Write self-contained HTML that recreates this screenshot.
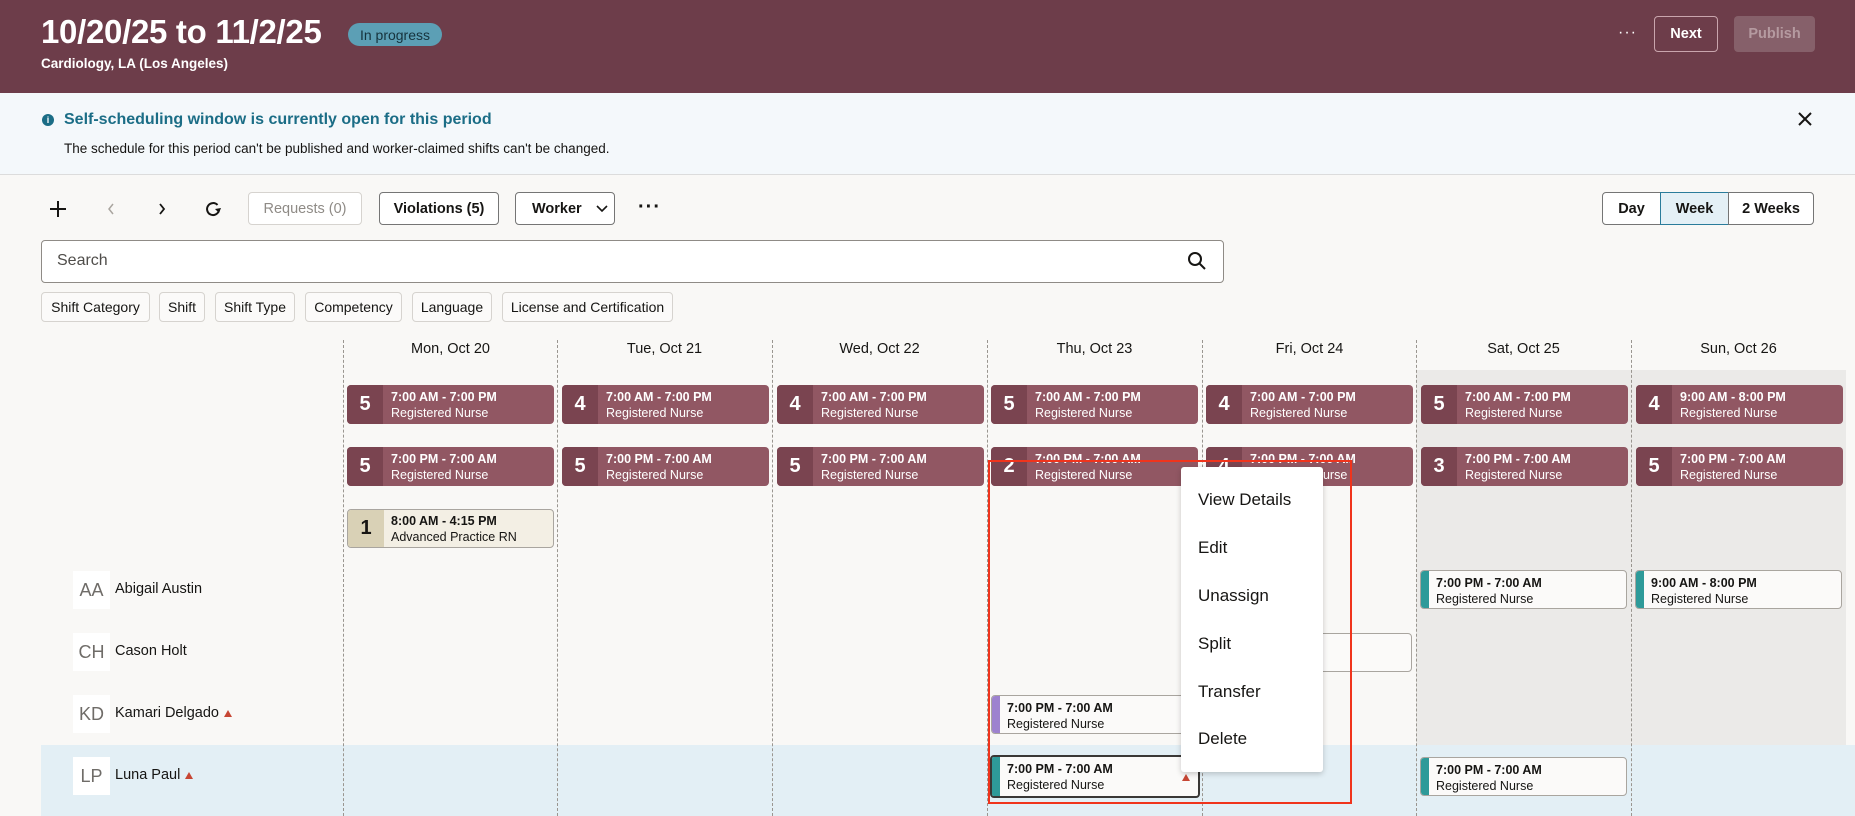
<!DOCTYPE html>
<html><head><meta charset="utf-8"><style>
*{box-sizing:border-box;margin:0;padding:0}
body{width:1855px;height:816px;overflow:hidden;background:#f9f8f6;font-family:"Liberation Sans",sans-serif;color:#161513;position:relative}
.a{position:absolute}
.hdr{left:0;top:0;width:1855px;height:93px;background:#6d3d4a}
.btn{position:absolute;border:1px solid #757575;border-radius:4px;background:#fff;font-size:14.5px;font-weight:bold;display:flex;align-items:center;justify-content:center;color:#161513}
.chip{position:absolute;top:292px;height:30px;border:1px solid #d6d3cf;border-radius:4px;background:#fbfaf9;font-size:14px;display:flex;align-items:center;justify-content:center}
.dh{position:absolute;top:341px;width:215px;text-align:center;font-size:14.5px}
.vl{position:absolute;top:340px;height:476px;border-left:1px dashed #9a9690;width:0}
.sc{position:absolute;width:207px;height:39px;border-radius:4px;background:#915763;color:#fff;overflow:hidden}
.sc .n{position:absolute;left:0;top:0;width:36px;height:100%;background:#7a4450;font-size:20px;font-weight:bold;display:flex;align-items:center;justify-content:center}
.sc .t{position:absolute;left:44px;top:4px;font-size:12.5px;font-weight:bold;line-height:16px;white-space:nowrap}
.sc .t span{font-weight:normal}
.wc{position:absolute;width:207px;height:39px;border-radius:4px;background:#fbfaf9;border:1px solid #a9a59f;overflow:hidden}
.wc .b{position:absolute;left:0;top:0;width:8px;height:100%;background:#2e9a99}
.wc .t{position:absolute;left:15px;top:4px;font-size:12.5px;line-height:16px;white-space:nowrap}
.av{position:absolute;left:73px;width:37px;height:38px;background:#fff;color:#6f6c68;font-size:18px;display:flex;align-items:center;justify-content:center}
.nm{position:absolute;left:115px;font-size:14.5px}
.tri{display:inline-block;width:0;height:0;border-left:4px solid transparent;border-right:4px solid transparent;border-bottom:7px solid #c74634;margin-left:5px}
.mi{position:absolute;left:1198px;font-size:17px}
</style></head><body>
<div class="a hdr"></div>
<div class="a" style="left:41px;top:13px;color:#fff;font-size:33px;font-weight:bold;letter-spacing:-0.3px">10/20/25 to 11/2/25</div>
<div class="a" style="left:348px;top:23px;width:94px;height:23px;border-radius:12px;background:#5c9fb5;color:#16333d;font-size:14px;display:flex;align-items:center;justify-content:center">In progress</div>
<div class="a" style="left:41px;top:56px;color:#fff;font-size:13.5px;font-weight:bold">Cardiology, LA (Los Angeles)</div>
<div class="a" style="left:1618px;top:24px;color:#fff;font-size:16px;letter-spacing:1px">···</div>
<div class="a" style="left:1654px;top:16px;width:64px;height:36px;border:1px solid #c9a5ad;border-radius:4px;color:#fff;font-weight:bold;font-size:14.5px;display:flex;align-items:center;justify-content:center">Next</div>
<div class="a" style="left:1734px;top:16px;width:81px;height:36px;background:#86606a;border-radius:4px;color:#b59aa0;font-weight:bold;font-size:14.5px;display:flex;align-items:center;justify-content:center">Publish</div>

<div class="a" style="left:0;top:93px;width:1855px;height:82px;background:#f4f8fb;border-bottom:1px solid #dcdcdc"></div>
<div class="a" style="left:42px;top:114px;width:12px;height:12px;border-radius:50%;background:#1b6d86;color:#fff;font-size:9px;font-weight:bold;text-align:center;line-height:12px">i</div>
<div class="a" style="left:64px;top:111px;color:#1b6d86;font-size:16px;font-weight:bold">Self-scheduling window is currently open for this period</div>
<div class="a" style="left:64px;top:141px;font-size:13.5px">The schedule for this period can't be published and worker-claimed shifts can't be changed.</div>
<svg class="a" style="left:1797px;top:111px" width="16" height="16"><path d="M2 2L14 14M14 2L2 14" stroke="#161513" stroke-width="2"/></svg>

<svg class="a" style="left:48px;top:199px" width="20" height="20"><path d="M10 2V18M2 10H18" stroke="#161513" stroke-width="2"/></svg>
<svg class="a" style="left:106px;top:201px" width="10" height="16"><path d="M7 3L3 8L7 13" stroke="#a9a59f" stroke-width="1.5" fill="none"/></svg>
<svg class="a" style="left:157px;top:201px" width="10" height="16"><path d="M3 3L7 8L3 13" stroke="#161513" stroke-width="1.8" fill="none"/></svg>
<svg class="a" style="left:204px;top:200px" width="18" height="18"><path d="M13.5 5A6 6 0 1 0 15 10" stroke="#161513" stroke-width="2" fill="none"/><path d="M11 9L15 13L17 8Z" fill="#161513"/></svg>
<div class="btn" style="left:248px;top:192px;width:114px;height:33px;border-color:#d6d3cf;color:#8f8b86;font-weight:normal">Requests (0)</div>
<div class="btn" style="left:379px;top:192px;width:120px;height:33px">Violations (5)</div>
<div class="btn" style="left:515px;top:192px;width:100px;height:33px;justify-content:flex-start;padding-left:16px">Worker<svg style="margin-left:14px" width="12" height="8"><path d="M1 1L6 6L11 1" stroke="#161513" stroke-width="1.6" fill="none"/></svg></div>
<div class="a" style="left:638px;top:196px;font-size:20px;font-weight:bold;letter-spacing:1px">···</div>
<div class="btn" style="left:1602px;top:192px;width:59px;height:33px;border-radius:4px 0 0 4px">Day</div>
<div class="btn" style="left:1660px;top:192px;width:69px;height:33px;border-radius:0;background:#e4f0f6;border-color:#2a7c9b">Week</div>
<div class="btn" style="left:1728px;top:192px;width:86px;height:33px;border-radius:0 4px 4px 0">2 Weeks</div>

<div class="a" style="left:41px;top:240px;width:1183px;height:43px;border:1px solid #8f8b86;border-radius:4px;background:#fff"></div>
<div class="a" style="left:57px;top:252px;font-size:16px;color:#4f4d4a">Search</div>
<svg class="a" style="left:1187px;top:251px" width="20" height="20"><circle cx="8" cy="8" r="6" stroke="#161513" stroke-width="2" fill="none"/><path d="M12.5 12.5L18 18" stroke="#161513" stroke-width="2"/></svg>

<div class="chip" style="left:41px;width:109px">Shift Category</div>
<div class="chip" style="left:159px;width:46px">Shift</div>
<div class="chip" style="left:215px;width:80px">Shift Type</div>
<div class="chip" style="left:305px;width:97px">Competency</div>
<div class="chip" style="left:412px;width:80px">Language</div>
<div class="chip" style="left:502px;width:171px">License and Certification</div>

<div class="a" style="left:1416px;top:370px;width:430px;height:446px;background:#ebeae8"></div>
<div class="a" style="left:41px;top:745px;width:1814px;height:71px;background:#e3eff5"></div>

<div class="vl" style="left:343px"></div><div class="vl" style="left:557px"></div><div class="vl" style="left:772px"></div><div class="vl" style="left:987px"></div><div class="vl" style="left:1202px"></div><div class="vl" style="left:1416px"></div><div class="vl" style="left:1631px"></div>

<div class="dh" style="left:343px">Mon, Oct 20</div>
<div class="dh" style="left:557px">Tue, Oct 21</div>
<div class="dh" style="left:772px">Wed, Oct 22</div>
<div class="dh" style="left:987px">Thu, Oct 23</div>
<div class="dh" style="left:1202px">Fri, Oct 24</div>
<div class="dh" style="left:1416px">Sat, Oct 25</div>
<div class="dh" style="left:1631px">Sun, Oct 26</div>

<div class="sc" style="left:347px;top:385px"><div class="n">5</div><div class="t">7:00 AM - 7:00 PM<br><span>Registered Nurse</span></div></div>
<div class="sc" style="left:562px;top:385px"><div class="n">4</div><div class="t">7:00 AM - 7:00 PM<br><span>Registered Nurse</span></div></div>
<div class="sc" style="left:777px;top:385px"><div class="n">4</div><div class="t">7:00 AM - 7:00 PM<br><span>Registered Nurse</span></div></div>
<div class="sc" style="left:991px;top:385px"><div class="n">5</div><div class="t">7:00 AM - 7:00 PM<br><span>Registered Nurse</span></div></div>
<div class="sc" style="left:1206px;top:385px"><div class="n">4</div><div class="t">7:00 AM - 7:00 PM<br><span>Registered Nurse</span></div></div>
<div class="sc" style="left:1421px;top:385px"><div class="n">5</div><div class="t">7:00 AM - 7:00 PM<br><span>Registered Nurse</span></div></div>
<div class="sc" style="left:1636px;top:385px"><div class="n">4</div><div class="t">9:00 AM - 8:00 PM<br><span>Registered Nurse</span></div></div>

<div class="sc" style="left:347px;top:447px"><div class="n">5</div><div class="t">7:00 PM - 7:00 AM<br><span>Registered Nurse</span></div></div>
<div class="sc" style="left:562px;top:447px"><div class="n">5</div><div class="t">7:00 PM - 7:00 AM<br><span>Registered Nurse</span></div></div>
<div class="sc" style="left:777px;top:447px"><div class="n">5</div><div class="t">7:00 PM - 7:00 AM<br><span>Registered Nurse</span></div></div>
<div class="sc" style="left:991px;top:447px"><div class="n">2</div><div class="t">7:00 PM - 7:00 AM<br><span>Registered Nurse</span></div></div>
<div class="sc" style="left:1206px;top:447px"><div class="n">4</div><div class="t">7:00 PM - 7:00 AM<br><span>Registered Nurse</span></div></div>
<div class="sc" style="left:1421px;top:447px"><div class="n">3</div><div class="t">7:00 PM - 7:00 AM<br><span>Registered Nurse</span></div></div>
<div class="sc" style="left:1636px;top:447px"><div class="n">5</div><div class="t">7:00 PM - 7:00 AM<br><span>Registered Nurse</span></div></div>

<div class="sc" style="left:347px;top:509px;background:#f3efe4;color:#161513;border:1px solid #a9a59f"><div class="n" style="background:#d9d1b6">1</div><div class="t" style="left:43px;top:3px">8:00 AM - 4:15 PM<br><span>Advanced Practice RN</span></div></div>

<div class="av" style="top:571px">AA</div><div class="nm" style="top:581px">Abigail Austin</div>
<div class="av" style="top:633px">CH</div><div class="nm" style="top:643px">Cason Holt</div>
<div class="av" style="top:695px">KD</div><div class="nm" style="top:705px">Kamari Delgado<span class="tri"></span></div>
<div class="av" style="top:757px">LP</div><div class="nm" style="top:767px">Luna Paul<span class="tri"></span></div>

<div class="wc" style="left:1420px;top:570px"><div class="b"></div><div class="t"><b>7:00 PM - 7:00 AM</b><br>Registered Nurse</div></div>
<div class="wc" style="left:1635px;top:570px"><div class="b"></div><div class="t"><b>9:00 AM - 8:00 PM</b><br>Registered Nurse</div></div>
<div class="wc" style="left:1202px;top:633px;width:210px"><div class="t" style="left:15px;top:10px"><b>7:00 AM - 7:00 PM</b></div></div>
<div class="wc" style="left:991px;top:695px"><div class="b" style="background:#9d82cf"></div><div class="t"><b>7:00 PM - 7:00 AM</b><br>Registered Nurse</div></div>
<div class="wc" style="left:990px;top:755px;width:210px;height:43px;border:2px solid #3a3836"><div class="b"></div><div class="t"><b>7:00 PM - 7:00 AM</b><br>Registered Nurse</div><span class="tri a" style="left:185px;top:17px"></span></div>
<div class="wc" style="left:1420px;top:757px"><div class="b"></div><div class="t"><b>7:00 PM - 7:00 AM</b><br>Registered Nurse</div></div>

<div class="a" style="left:1181px;top:467px;width:142px;height:305px;background:#fff;border-radius:3px;box-shadow:0 2px 6px rgba(0,0,0,.2)"></div>
<div class="mi" style="top:490px">View Details</div>
<div class="mi" style="top:538px">Edit</div>
<div class="mi" style="top:586px">Unassign</div>
<div class="mi" style="top:634px">Split</div>
<div class="mi" style="top:682px">Transfer</div>
<div class="mi" style="top:729px">Delete</div>
<div class="a" style="left:988px;top:460px;width:364px;height:344px;border:2px solid #f0341c"></div>
</body></html>
